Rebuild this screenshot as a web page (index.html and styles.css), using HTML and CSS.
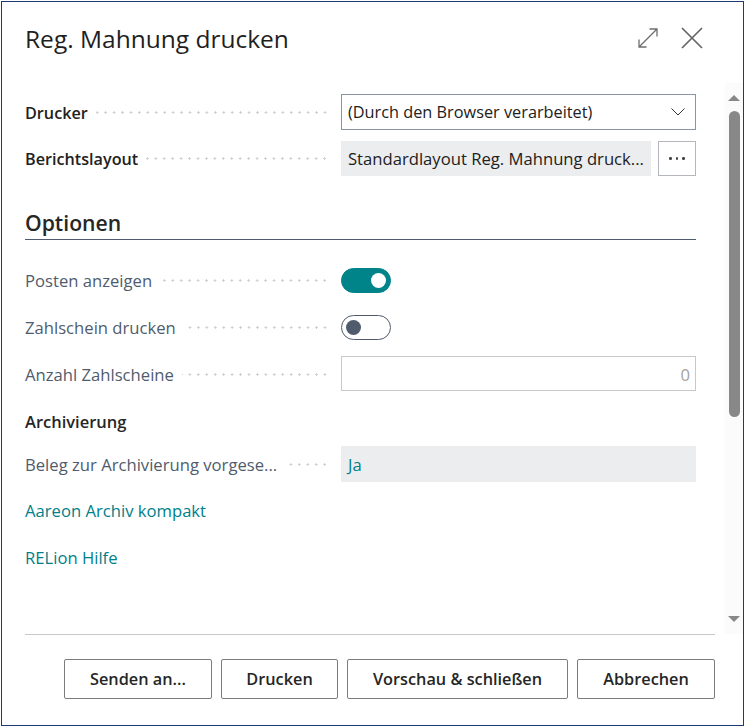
FILE: index.html
```html
<!DOCTYPE html>
<html lang="de">
<head>
<meta charset="utf-8">
<title>Reg. Mahnung drucken</title>
<link rel="stylesheet" href="styles.css">
</head>
<body>
<div class="dialog">
  <header class="head">
    <h1 class="title">Reg. Mahnung drucken</h1>
    <svg class="icon-expand" width="22" height="22" viewBox="0 0 22 22" fill="none" stroke="#6e6e6e" stroke-width="1.3"><path d="M2 20 20 2M12.5 2H20V9.5M2 12.5V20H9.5"/></svg>
    <svg class="icon-close" width="22" height="22" viewBox="0 0 22 22" fill="none" stroke="#666" stroke-width="1.7"><path d="M1 1 21 21M21 1 1 21"/></svg>
  </header>
  <div class="middle">
    <main class="content">
      <div class="row row-first">
        <div class="label strong"><span>Drucker</span><i class="dots"></i></div>
        <div class="field select"><span>(Durch den Browser verarbeitet)</span>
          <svg width="14" height="8" viewBox="0 0 14 8" fill="none" stroke="#333" stroke-width="1"><path d="M.5.5 7 7 13.5.5"/></svg>
        </div>
      </div>
      <div class="row row-layout">
        <div class="label strong"><span>Berichtslayout</span><i class="dots"></i></div>
        <div class="field-group">
          <div class="field readonly grow">Standardlayout Reg. Mahnung druck...</div>
          <div class="more"><b></b><b></b><b></b></div>
        </div>
      </div>
      <h2 class="section">Optionen</h2>
      <div class="row row-toggle1">
        <div class="label"><span>Posten anzeigen</span><i class="dots"></i></div>
        <div class="toggle on"><b></b></div>
      </div>
      <div class="row row-toggle2">
        <div class="label"><span>Zahlschein drucken</span><i class="dots"></i></div>
        <div class="toggle"><b></b></div>
      </div>
      <div class="row row-count">
        <div class="label"><span>Anzahl Zahlscheine</span><i class="dots"></i></div>
        <div class="field disabled">0</div>
      </div>
      <h3 class="group">Archivierung</h3>
      <div class="row row-archive">
        <div class="label"><span>Beleg zur Archivierung vorgese...</span><i class="dots"></i></div>
        <div class="field readonly link">Ja</div>
      </div>
      <a class="action first">Aareon Archiv kompakt</a>
      <a class="action">RELion Hilfe</a>
    </main>
    <div class="scrollbar">
      <i class="arrow up"></i>
      <div class="thumb"></div>
      <i class="arrow down"></i>
    </div>
  </div>
  <footer class="foot">
    <button class="btn b1">Senden an...</button>
    <button class="btn b2">Drucken</button>
    <button class="btn b3">Vorschau &amp; schließen</button>
    <button class="btn b4">Abbrechen</button>
  </footer>
</div>
</body>
</html>
```
FILE: styles.css
```css
* { box-sizing: border-box; }
html, body { margin: 0; padding: 0; background: #fff; }
body { width: 745px; height: 727px; padding: 1px; overflow: hidden; font-family: "Open Sans", "Noto Sans", sans-serif; font-size: 16.65px; color: #212121; }
.dialog { width: 743px; height: 725px; border: 1px solid #1d3a72; display: flex; flex-direction: column; background: #fff; }
.head { height: 81px; flex: none; display: flex; align-items: flex-start; padding: 25px 0 0 23px; }
.title { margin: 0; flex: 1; font-size: 24.5px; line-height: 24px; font-weight: 500; color: #1f1f1f; }
.icon-expand { margin-left: 0; }
.icon-close { margin-left: 22px; margin-right: 40px; }
.middle { height: 551px; flex: none; display: flex; }
.content { width: 723px; padding: 11px 29px 0 23px; }
.row { display: flex; align-items: center; }
.row-first { height: 36px; }
.row-layout { height: 35px; margin-top: 11px; }
.row-toggle1 { height: 25px; margin-top: 28px; }
.row-toggle2 { height: 25px; margin-top: 22px; }
.row-count { height: 35px; margin-top: 16px; }
.row-archive { height: 36px; }
.label { width: 316px; flex: none; display: flex; align-items: center; color: #505c6d; padding-right: 12px; }
.row-first .label, .row-count .label, .row-archive .label, .row-count .field, .row-archive .field { padding-top: 1px; }
.label span { white-space: nowrap; }
.label.strong { color: #212121; font-weight: 600; font-size: 16.2px; }
.dots { flex: 1; height: 3px; margin-left: 8px; background-image: radial-gradient(circle at center, #cfcfcf 1.1px, transparent 1.3px); background-size: 8.45px 3px; background-position: right center; }
.field { flex: 1; height: 100%; display: flex; align-items: center; padding: 0 6px; white-space: nowrap; }
.select { border: 1px solid #8a94a3; justify-content: space-between; padding-right: 10px; font-size: 16.3px; }
.field-group { flex: 1; height: 100%; display: flex; gap: 7px; }
.readonly { background: #ecedef; padding-left: 7px; }
.grow { flex: 1; }
.more { width: 38px; border: 1px solid #b4b8bd; display: flex; align-items: center; justify-content: center; gap: 4px; }
.more b { width: 2.5px; height: 2.5px; background: #444; border-radius: 50%; }
.section { margin: 30px 0 0; height: 34px; border-bottom: 1px solid #505c6d; font-size: 21.2px; line-height: 34px; font-weight: 600; color: #262626; }
.toggle { width: 50px; height: 25px; border-radius: 13px; border: 1px solid #505c6d; display: flex; align-items: center; padding: 0 4px; }
.toggle b { width: 15px; height: 15px; border-radius: 50%; background: #505c6d; }
.toggle.on { background: #008489; border-color: #008489; justify-content: flex-end; }
.toggle.on b { background: #fff; }
.disabled { border: 1px solid #c8c8c8; justify-content: flex-end; color: #a3a3a3; padding-right: 5px; background: #fff; }
.group { margin: 20px 0 13px; height: 22px; line-height: 22px; font-size: 16.5px; font-weight: 600; color: #262626; }
.link { color: #00808a; }
.action { display: block; color: #00808a; height: 24px; line-height: 24px; margin-top: 23px; }
.action.first { margin-top: 17px; }
.scrollbar { width: 18px; flex: none; background: #fbfbfb; display: flex; flex-direction: column; align-items: center; padding: 12px 0; }
.arrow { width: 0; height: 0; border-left: 6.5px solid transparent; border-right: 6.5px solid transparent; }
.arrow.up { border-bottom: 6px solid #888; }
.arrow.down { border-top: 6px solid #888; }
.thumb { width: 11px; height: 306px; margin-top: 10px; margin-bottom: auto; border-radius: 6px; background: #888; }
.foot { flex: 1; margin: 0 28px 0 23px; border-top: 1px solid #c8c8c8; display: flex; justify-content: flex-end; align-items: flex-start; gap: 9px; padding-top: 24px; }
.btn { height: 40px; border: 1px solid #7c7c7c; border-radius: 2px; background: #fff; font: 600 16.3px "Open Sans", "Noto Sans", sans-serif; color: #262626; padding: 0; }
.b1 { width: 148px; }
.b2 { width: 117px; }
.b3 { width: 221px; }
.b4 { width: 138px; }
```
